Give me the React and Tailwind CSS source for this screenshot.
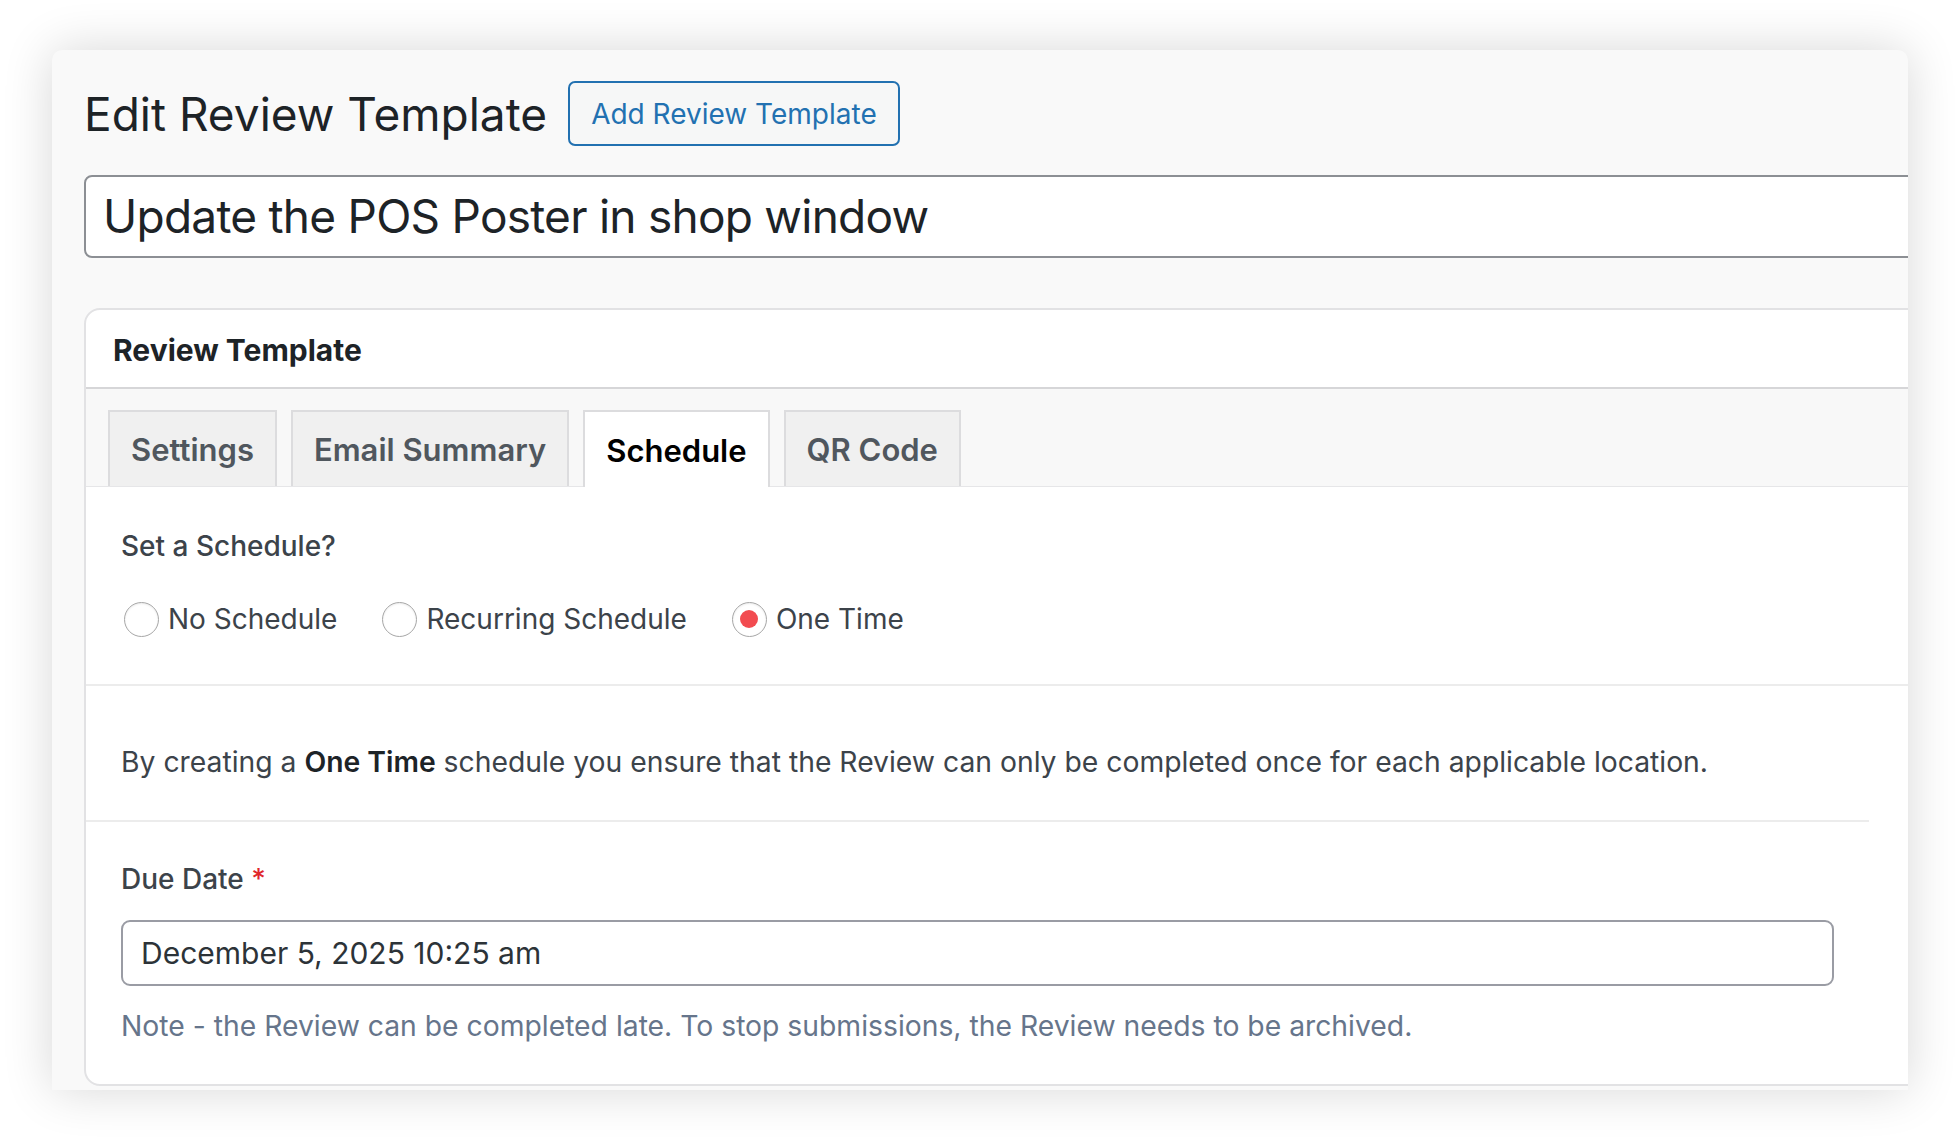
import React from "react";

function Radio({ checked, label }) {
  return (
    <div className="flex items-center gap-[9px]">
      <span className="ml-[3px] flex h-[35px] w-[35px] items-center justify-center rounded-full border-[1.5px] border-[#a7a7a7] bg-white shadow-[inset_0_1px_2px_rgba(0,0,0,0.08)]">
        {checked && <span className="h-[18px] w-[18px] rounded-full bg-[#f24b50]" />}
      </span>
      <span className="text-[28px] leading-[40px] text-[#3c434a]">{label}</span>
    </div>
  );
}

function Tab({ label, active }) {
  return (
    <div
      className={
        active
          ? "relative -mb-px flex h-[77px] items-center border-2 border-b-0 border-[#dcdcde] bg-white px-[21px] pt-[3px] text-[31px] font-semibold text-black"
          : "flex h-[76px] items-center border-2 border-b-0 border-[#dcdcde] bg-[#f0f0f0] px-[21px] pt-[3px] text-[31px] font-semibold text-[#50575e]"
      }
    >
      {label}
    </div>
  );
}

export default function App() {
  return (
    <div
      className="h-[1144px] w-[1960px] overflow-hidden bg-white pl-[52px] pt-[50px]"
      style={{ fontFamily: "Inter, 'Noto Sans', sans-serif" }}
    >
      <div className="h-[1040px] w-[1856px] overflow-hidden rounded-t-[10px] bg-[#f9f9f9] pl-[32px] pt-[31px] shadow-[0_0_50px_rgba(0,0,0,0.16)]">
        {/* heading row */}
        <div className="flex h-[65px] items-center gap-[21px]">
          <h1 className="text-[46px] font-normal leading-[60px] text-[#1d2327]">
            Edit Review Template
          </h1>
          <div className="flex h-[65px] items-center rounded-[7px] border-2 border-[#2271b1] bg-[#f6f7f7] px-[21px] text-[28px] text-[#2271b1]">
            Add Review Template
          </div>
        </div>

        {/* title input */}
        <div className="mt-[29px] flex h-[83px] w-[1900px] items-center rounded-[8px] border-2 border-[#8c8f94] bg-white pl-[17px] text-[46px] tracking-[-0.75px] text-[#1d2327]">
          Update the POS Poster in shop window
        </div>

        {/* panel */}
        <div className="mt-[50px] w-[1900px] overflow-hidden rounded-l-[16px] border-2 border-[#e2e2e4] bg-white">
          <div className="flex h-[79px] items-center border-b-2 border-[#d6d6d8] pl-[27px] pt-[4px] text-[30px] font-bold text-[#1d2327]">
            Review Template
          </div>

          {/* tab bar */}
          <div className="flex h-[98px] items-end gap-[14px] border-b border-[#e6e6e8] bg-[#f8f8f8] pl-[22px]">
            <Tab label="Settings" />
            <Tab label="Email Summary" />
            <Tab label="Schedule" active />
            <Tab label="QR Code" />
          </div>

          {/* schedule type */}
          <div className="border-b-2 border-[#ececec] pb-[45px] pl-[35px] pt-[39px]">
            <div className="text-[28px] font-medium leading-[40px] text-[#3c434a]">Set a Schedule?</div>
            <div className="mt-[33px] flex items-center gap-[42px]">
              <Radio label="No Schedule" />
              <Radio label="Recurring Schedule" />
              <Radio label="One Time" checked />
            </div>
          </div>

          {/* description */}
          <div className="pb-[38px] pl-[35px] pt-[56px] text-[28.3px] leading-[40px] text-[#3c434a]">
            By creating a <span className="font-semibold text-[#1d2327]">One Time</span> schedule you ensure that the Review can only be completed once for each applicable location.
          </div>

          {/* due date */}
          <div className="w-[1783px] border-t-2 border-[#ececec] px-[35px] pb-[38px] pt-[37px]">
            <div className="text-[28px] font-medium leading-[40px] text-[#3c434a]">
              Due Date <span className="text-[#e0262b]">*</span>
            </div>
            <div className="mt-[21px] flex h-[66px] items-center rounded-[9px] border-2 border-[#9a9ca4] pl-[18px] text-[30px] text-[#2c3338]">
              December 5, 2025 10:25 am
            </div>
            <div className="mt-[20px] text-[28.3px] leading-[40px] text-[#66758b]">
              Note - the Review can be completed late. To stop submissions, the Review needs to be archived.
            </div>
          </div>
        </div>
      </div>
    </div>
  );
}
